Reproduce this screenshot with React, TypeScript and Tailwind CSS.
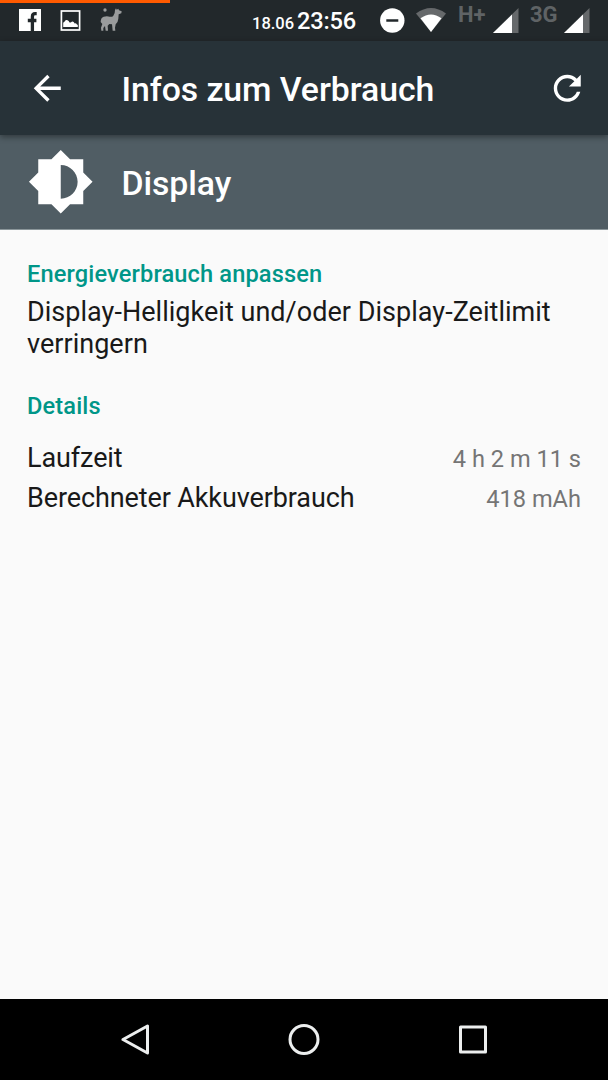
import type { ReactNode } from 'react'

function SignalIcon() {
  return (
    <svg className="size-[26px]" viewBox="0 0 26 26">
      <path d="M25.500 0v25H0z" fill="#66696b" />
      <path d="M19 6.500V25H0z" fill="#fff" />
    </svg>
  )
}

function StatusBar() {
  return (
    <div className="h-[41px] bg-[#22282b]">
      <div className="h-[3px] w-[170px] bg-[#ff5a00]" />
      <div className="flex h-[38px] items-start pt-[5px] text-white">
        <svg className="mt-px ml-[19px] size-[22px]" viewBox="0 0 22 22">
          <path d="M0 0h22v22H0z" fill="#fff" />
          <path d="M17.700 4.700h-1.600q-2.700 0-2.700 3V22M8.800 11.500h8.600" fill="none" stroke="#22282b" strokeWidth="3.300" />
        </svg>
        <svg className="mt-[2px] ml-[19px] size-[21px]" viewBox="0 0 21 21">
          <rect x="1.400" y="1" width="18.200" height="19" fill="none" stroke="#fff" strokeWidth="1.700" />
          <path fill="#fff" d="M3.200 17v-4q.5-1.500 1.500-1.500 1-2 2.800-1.300 1.500.5 1.800 2 1 .5 1.800 0 1.300-1.500 2.800 0l.8 1.300q1.500-.5 2 .8l1.100.6V17z" />
        </svg>
        <svg className="ml-[19px] h-[24px] w-[23px]" viewBox="0 0 69 72">
          <circle cx="15" cy="6" r="5" fill="#999b9c" />
          <path fill="#999b9c" d="M2 42q0-13 9-16 10-3 18 0 7 2 11-3l4-8 1-9 3-5 2 4 5-3 2 5 8 3-1 6-8 3-1 13q-1 11-8 17l-2 10 1 9h-8l-2-19-8-1-5 5 1 15h-7l-2-14-5 6v8H4l-1-9 4-11z" />
        </svg>
        <div className="ml-[129px] flex w-[105px] items-baseline gap-[3px] whitespace-nowrap font-medium leading-[26px]">
          <span className="text-[16.500px]">18.06</span>
          <span className="text-[23.600px] tracking-[-0.200px]">23:56</span>
        </div>
        <svg className="ml-[23px] size-[25px]" viewBox="0 0 25 25">
          <circle cx="12.300" cy="12.500" r="12.200" fill="#fff" />
          <path d="M6.300 12.500h12" stroke="#22282b" strokeWidth="2.500" />
        </svg>
        <svg className="ml-[11px] h-[25px] w-[30px]" viewBox="0 0 30 25">
          <path d="M0 5.500Q15-5.500 30 5.500L15 24z" fill="#66696b" />
          <path d="M4.500 10.300Q15 2.500 25.500 10.300L15 24z" fill="#fff" />
        </svg>
        <span className="-mt-[6px] ml-[12px] w-[35px] text-[22px] font-bold leading-[26px] text-[#5f6365]">H+</span>
        <SignalIcon />
        <span className="-mt-[6px] ml-[11px] w-[34px] text-[22px] font-bold leading-[26px] text-[#5f6365]">3G</span>
        <SignalIcon />
      </div>
    </div>
  )
}

function SectionTitle({ children }: { children: ReactNode }) {
  return <h2 className="text-[23.600px] font-medium leading-[28px] tracking-[0.140px] text-[#009688]">{children}</h2>
}

function DetailRow({ label, value }: { label: string; value: string }) {
  return (
    <div className="flex h-[40px] items-baseline justify-between">
      <span className="text-[27px] leading-[40px] tracking-[-0.110px] text-[#191919]">{label}</span>
      <span className="text-[23.600px] leading-[40px] text-[#757575]">{value}</span>
    </div>
  )
}

export default function App() {
  return (
    <div className="flex h-[1080px] w-[608px] flex-col overflow-hidden bg-[#fafafa] font-['Roboto',sans-serif]">
      <StatusBar />
      <header className="relative flex h-[94px] items-center bg-[#273238] px-[27px] text-white shadow-[0_2px_6px_rgba(0,0,0,0.4)]">
        <svg className="size-[40.500px]" viewBox="0 0 24 24" fill="currentColor">
          <path d="M20 11H7.830l5.590-5.590L12 4l-8 8 8 8 1.410-1.410L7.830 13H20v-2z" />
        </svg>
        <h1 className="ml-[54px] pt-[4px] text-[33.800px] font-medium tracking-[-0.060px]">Infos zum Verbrauch</h1>
        <svg className="-mr-[6px] ml-auto size-[40.500px]" viewBox="0 0 24 24" fill="currentColor">
          <path d="M17.650 6.350C16.200 4.900 14.210 4 12 4c-4.420 0-7.990 3.580-7.990 8s3.570 8 7.990 8c3.730 0 6.840-2.550 7.730-6h-2.080c-.820 2.330-3.040 4-5.650 4-3.310 0-6-2.690-6-6s2.690-6 6-6c1.660 0 3.140.690 4.220 1.780L13 11h7V4l-2.350 2.350z" />
        </svg>
      </header>
      <div className="flex h-[95px] items-center border-b border-[#8b969a] bg-[#505d64] px-[27px] text-white">
        <svg className="size-[67.500px]" viewBox="0 0 24 24" fill="currentColor">
          <path d="M20 15.310L23.310 12 20 8.690V4h-4.690L12 .690 8.690 4H4v4.690L.690 12 4 15.310V20h4.690L12 23.310 15.310 20H20v-4.690zM12 18V6c3.310 0 6 2.690 6 6s-2.690 6-6 6z" />
        </svg>
        <span className="ml-[27px] pt-[4px] text-[33.800px] font-medium tracking-[-0.080px]">Display</span>
      </div>
      <main className="flex-1 px-[27px] pt-[30px]">
        <SectionTitle>Energieverbrauch anpassen</SectionTitle>
        <p className="mt-[8px] text-[27px] leading-[32px] tracking-[0.030px] text-[#191919]">
          Display-Helligkeit und/oder Display-Zeitlimit verringern
        </p>
        <div className="mt-[32px]">
          <SectionTitle>Details</SectionTitle>
        </div>
        <div className="mt-[18px]">
          <DetailRow label="Laufzeit" value="4 h 2 m 11 s" />
          <DetailRow label="Berechneter Akkuverbrauch" value="418 mAh" />
        </div>
      </main>
      <nav className="flex h-[81px] items-center bg-black pl-[119px]">
        <svg className="size-[32px]" viewBox="0 0 32 32" fill="none" stroke="#eceeee" strokeWidth="3" strokeLinejoin="round">
          <path d="M28.500 2v27L4 15.500z" />
        </svg>
        <svg className="ml-[137px] size-[32px]" viewBox="0 0 32 32" fill="none" stroke="#eceeee" strokeWidth="3">
          <circle cx="16" cy="15.500" r="14" />
        </svg>
        <svg className="ml-[137px] size-[32px]" viewBox="0 0 32 32" fill="none" stroke="#eceeee" strokeWidth="3" strokeLinejoin="round">
          <rect x="3.500" y="3" width="25" height="25" />
        </svg>
      </nav>
    </div>
  )
}
